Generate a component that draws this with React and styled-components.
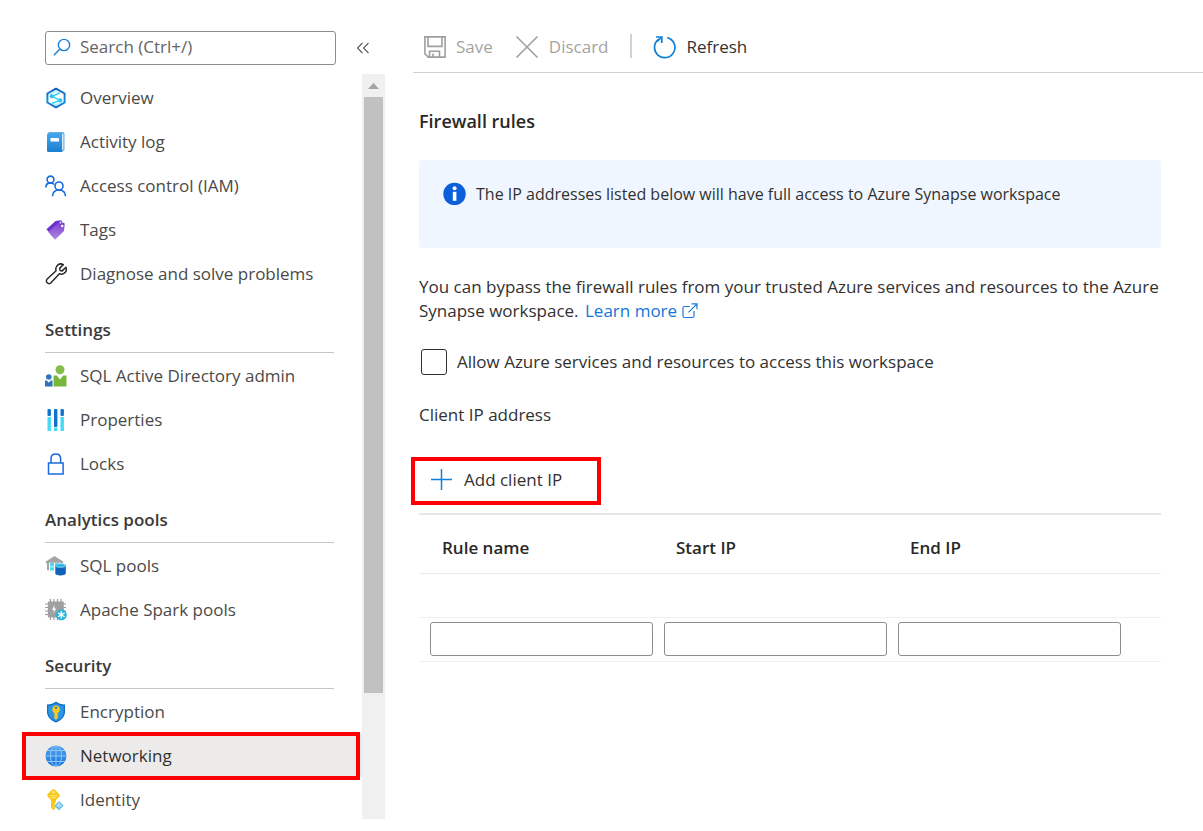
import React from "react";
import styled, { createGlobalStyle, css } from "styled-components";

const GlobalStyle = createGlobalStyle`
  *, *::before, *::after { box-sizing: border-box; }
  body {
    margin: 0;
    background: #fff;
    color: #323130;
    font-family: "Open Sans", "Noto Sans", sans-serif;
    font-size: 17px;
    line-height: 24px;
  }
  button, input { font: inherit; color: inherit; }
  svg { display: block; flex: none; }
`;

const Page = styled.div`
  display: flex;
  align-items: flex-start;
`;

/* Sidebar */

const Sidebar = styled.aside`
  flex: none;
  width: 385px;
  padding: 31px 0 12px 22px;
`;

const SearchRow = styled.div`
  display: flex;
  align-items: center;
  gap: 20px;
  padding-left: 23px;
`;

const SearchBox = styled.label`
  display: flex;
  align-items: center;
  gap: 9px;
  width: 291px;
  height: 34px;
  padding: 0 7px 2px;
  border: 1px solid #8f8d8b;
  border-radius: 3px;
`;

const SearchInput = styled.input`
  flex: 1;
  min-width: 0;
  padding: 0;
  border: 0;
  outline: 0;
  background: transparent;
  &::placeholder { color: #666463; opacity: 1; }
`;

const IconButton = styled.button`
  display: flex;
  padding: 0;
  border: 0;
  background: none;
  cursor: pointer;
`;

const NavScroller = styled.div`
  display: flex;
  margin-top: 9px;
`;

const Nav = styled.nav`
  flex: 1;
  padding-top: 1px;
`;

const NavHeading = styled.h2`
  display: flex;
  align-items: flex-end;
  height: 58px;
  margin: 0 28px 0 23px;
  padding-bottom: 10px;
  border-bottom: 1px solid #c8c6c4;
  color: #3b3a39;
  font-size: 17px;
  font-weight: 600;
`;

const NavList = styled.ul`
  margin: 0;
  padding: 0;
  list-style: none;
`;

const NavLink = styled.a`
  position: relative;
  display: flex;
  align-items: center;
  gap: 13px;
  height: 44px;
  padding: 1px 0 0 23px;
  color: #4b4a48;
  text-decoration: none;
  ${(p) => p.$active && css`
    background: #edebe9;
    color: #323130;
  `}
`;

const Callout = styled.span`
  position: absolute;
  inset: ${(p) => p.$inset || "0"};
  border: 4px solid #fe0000;
  pointer-events: none;
`;

const ScrollTrack = styled.div`
  display: flex;
  flex-direction: column;
  width: 23px;
  margin-bottom: 2px;
  background: #f0f0f0;
`;

const ScrollArrow = styled.div`
  display: flex;
  align-items: center;
  justify-content: center;
  height: 23px;
`;

const ScrollThumb = styled.div`
  height: 80%;
  margin: 0 2px;
  background: #c1c1c1;
`;

/* Main pane */

const Main = styled.main`
  flex: 1;
  min-width: 0;
  padding-left: 28px;
`;

const Toolbar = styled.div`
  display: flex;
  align-items: flex-start;
  height: 73px;
  padding: 22px 0 0 11px;
  border-bottom: 1px solid #d2d0ce;
`;

const ToolButton = styled.button`
  display: flex;
  align-items: center;
  gap: 10px;
  height: 50px;
  margin-right: 22px;
  padding: 0;
  border: 0;
  background: none;
  color: #323130;
  &:disabled { color: #a6a4a2; }
`;

const ToolDivider = styled.span`
  width: 2px;
  height: 24px;
  margin: 12px 21px 0 0;
  background: #d4d2d0;
`;

const Content = styled.div`
  padding: 36px 42px 36px 6px;
`;

const Title = styled.h1`
  margin: 0;
  color: #292827;
  font-size: 18px;
  font-weight: 600;
  line-height: 24px;
`;

const InfoBanner = styled.div`
  display: flex;
  align-items: flex-start;
  gap: 10px;
  min-height: 88px;
  margin-top: 27px;
  padding: 22px 24px;
  border-radius: 3px;
  background: #f0f6ff;
  font-size: 16px;
`;

const Paragraph = styled.p`
  margin: 27px 0 0;
`;

const TextLink = styled.a`
  display: inline-flex;
  align-items: center;
  gap: 5px;
  height: 24px;
  margin-left: 2px;
  color: #1375d8;
  text-decoration: none;
  vertical-align: top;
`;

const CheckRow = styled.label`
  display: flex;
  align-items: center;
  gap: 10px;
  margin-top: 26px;
  padding-left: 2px;
`;

const Checkbox = styled.input`
  appearance: none;
  flex: none;
  width: 26px;
  height: 26px;
  margin: 0;
  border: 1px solid #323130;
  border-radius: 3px;
  background: #fff;
  &:checked { background: #0078d4; }
`;

const FieldTitle = styled.p`
  margin: 28px 0 0;
`;

const AddButton = styled.button`
  position: relative;
  display: flex;
  align-items: center;
  gap: 12px;
  height: 48px;
  margin: 30px 0 8px -8px;
  padding: 0 39px 3px 20px;
  border: 0;
  background: none;
`;

const RulesTable = styled.table`
  width: 100%;
  border-top: 2px solid #e8e6e4;
  border-spacing: 0;
  table-layout: fixed;
`;

const HeadCell = styled.th`
  width: ${(p) => p.$width || "auto"};
  height: 59px;
  padding: 8px 0 0 23px;
  border-bottom: 1px solid #edebe9;
  color: #292827;
  font-weight: 600;
  text-align: left;
`;

const Cell = styled.td`
  height: 44px;
  padding: 0 0 1px 11px;
  border-bottom: 1px solid #f1f0ef;
`;

const TextField = styled.input`
  display: block;
  width: 100%;
  height: 34px;
  padding: 0 8px;
  border: 1px solid #8f8d8b;
  border-radius: 3px;
  background: #fff;
`;

/* Icons */

const Svg = ({ size = 22, children, ...rest }) => (
  <svg width={size} height={size} viewBox={`0 0 ${size} ${size}`} fill="none" aria-hidden="true" {...rest}>
    {children}
  </svg>
);

const SearchIcon = () => (
  <Svg size={18} stroke="#1b7fd6" strokeWidth="1.4">
    <circle cx="11" cy="7" r="5.6" />
    <path d="M7 11 .8 17.2" />
  </Svg>
);

const CollapseIcon = () => (
  <Svg size={14} stroke="#5a5856" strokeWidth="1.1">
    <path d="M6.500 2 1.500 7l5 5M12.500 2l-5 5 5 5" />
  </Svg>
);

const SynapseIcon = () => (
  <Svg>
    <defs>
      <linearGradient id="hex" x1="0" y1="0" x2="0" y2="1">
        <stop offset="0" stopColor="#0f5fb8" />
        <stop offset=".6" stopColor="#1490df" />
        <stop offset="1" stopColor="#1268c4" />
      </linearGradient>
    </defs>
    <path d="m11 1.700 8.600 4.800v9L11 20.300l-8.600-4.800v-9z" stroke="url(#hex)" strokeWidth="2" strokeLinejoin="round" />
    <path d="m4.500 7.600 6.500-3.500 3.800 2.200M17.500 14.500 11 18l-3.800-2.100" stroke="#a6edfd" strokeWidth="1.200" />
    <path d="M14.800 6 7 9.500l8.300 3.900-8.300 2.900" stroke="#3fd6f5" strokeWidth="1.600" strokeLinejoin="round" />
    <circle cx="6.800" cy="9.300" r="2.100" fill="#32bfe8" />
    <circle cx="15.200" cy="13.300" r="2.100" fill="#32c9ee" />
  </Svg>
);

const LogIcon = () => (
  <Svg>
    <defs>
      <linearGradient id="book" x1="0" y1="0" x2="0" y2="1">
        <stop offset="0" stopColor="#45a8ee" />
        <stop offset="1" stopColor="#1b7fd0" />
      </linearGradient>
    </defs>
    <path d="M3.500 1h14.200q1.800 0 1.800 1.800v15.700L17.500 21H4z" fill="#70addb" />
    <path d="M17 3h1.400v15L17 19.500z" fill="#d5eafa" />
    <path d="M2 3.500Q2 2 3.500 2H16q1 0 1 1v18H3.500Q2 21 2 19.500z" fill="url(#book)" />
    <rect x="5.500" y="7" width="8.500" height="3.600" rx=".5" fill="#fff" />
  </Svg>
);

const AccessIcon = () => (
  <Svg stroke="#146be0" strokeWidth="1.600">
    <circle cx="5.500" cy="4.500" r="3.400" />
    <path d="M.9 12.500C.9 9 3 7.900 5.500 7.900c1.700 0 2.700.6 3.500 1.600" />
    <circle cx="14" cy="11" r="4" />
    <path d="M7.500 21.300c.2-4 2.900-6.300 6.500-6.300s6.300 2.300 6.500 6.300" />
  </Svg>
);

const TagsIcon = () => (
  <Svg>
    <defs>
      <linearGradient id="tag" x1="0" y1="0" x2="0" y2="1">
        <stop offset="0" stopColor="#7a3fd0" />
        <stop offset="1" stopColor="#b48ae0" />
      </linearGradient>
    </defs>
    <path d="M1.500 10.300 10.500 2l5-.8q1.500 0 1.500 1.500l-.5 5.500L8 18z" fill="#6c2fd1" />
    <path d="M3.300 13 13 4l5-.5q1.700 0 1.700 1.600L19 12l-9 8.800z" fill="url(#tag)" />
    <circle cx="15.400" cy="3.500" r=".9" fill="#efe6fb" />
    <circle cx="17.200" cy="7" r="1.200" fill="#fff" />
  </Svg>
);

const WrenchIcon = () => (
  <Svg stroke="#2a2928" strokeWidth="1.500" strokeLinejoin="round">
    <path d="M18.300 1.600 14.600 5.300l.5 2.100 2.100.5 3.700-3.700c1 2.500 0 5.200-2.300 6.400-1.300.7-2.900.7-4.200.2L6 19.800c-1 1.100-2.700 1.100-3.800 0-1.100-1-1.100-2.700 0-3.800l8.900-8.300c-.7-2 .1-4.400 1.900-5.800 1.500-1.200 3.600-1.200 5.300-.3z" />
  </Svg>
);

const AdminIcon = () => (
  <Svg>
    <circle cx="15" cy="4.800" r="4.500" fill="#86bd4a" />
    <path d="M8.600 10.500h3.200l3.200 4 3.200-4h3.300V21.500H8.600z" fill="#76b83c" />
    <circle cx="3.800" cy="12" r="2.800" fill="#2d78bd" />
    <path d="M0 15.500h1.800l2 2.300 2-2.300h1.700v6H0z" fill="#2b74b8" />
  </Svg>
);

const PropertiesIcon = () => (
  <Svg>
    <path d="M2.500 8h3.400v14H2.500zM9 18.500h3.400V22H9zM15.500 8h3.400v14h-3.400z" fill="#45daf5" />
    <rect x="2.500" y="0" width="3.400" height="7" rx="1" fill="#0f72cf" />
    <rect x="9" y="0" width="3.400" height="18" rx="1" fill="#0f72cf" />
    <rect x="15.500" y="0" width="3.400" height="7" rx="1" fill="#0f72cf" />
  </Svg>
);

const LockIcon = () => (
  <Svg stroke="#1a6be0" strokeWidth="1.500">
    <path d="M3.500 10h14.600v11H3.500zM6 10V5.500C6 2.700 8 .9 10.800.9s4.800 1.800 4.800 4.600V10" />
  </Svg>
);

const SqlPoolIcon = () => (
  <Svg>
    <path d="M.8 6.500 9.500 1l8.700 5.500v1.800H16V7.800H4v7.500H2V8.300H.8z" fill="#a5a5a5" />
    <path d="M5 8h4v3.500H5zM10 8h4.300v3.500H10zM5 12.300h4V15.500H5z" fill="#4fd8f5" />
    <path d="M10.300 10.500v8c0 1.100 2.200 1.900 5.200 1.900s5.300-.8 5.300-1.900v-8z" fill="#0f62b8" />
    <ellipse cx="15.500" cy="10.500" rx="5.200" ry="1.900" fill="#2fb4e6" stroke="#b9ecfa" strokeWidth=".6" />
  </Svg>
);

const SparkIcon = () => (
  <Svg>
    <path d="M5.500 0v21M9 0v21M12.500 0v21M16 0v21M0 5h21M0 8.500h21M0 12h21M0 15.500h14" stroke="#9b9b9b" strokeWidth="1.200" />
    <rect x="2.800" y="2.500" width="16" height="16" rx="1" fill="#a0a0a0" />
    <path d="m9.500 6-2.500 5h2l-.8 3.500 3-5H9.400z" fill="#fff" />
    <circle cx="16.300" cy="15.800" r="5.500" fill="#28b3d9" />
    <path d="M16.300 12v7.600M13 13.900l6.600 3.800M19.600 13.900 13 17.700" stroke="#fff" strokeWidth="1.300" />
  </Svg>
);

const EncryptionIcon = () => (
  <Svg>
    <path d="M2 3.500C6 3.500 8.500 2.500 11 .5c2.500 2 5 3 9 3v7.200c0 5.300-4 8.600-9 10.900-5-2.300-9-5.600-9-10.900z" fill="#0e6cc4" />
    <path d="M3.200 4.500c3.400 0 5.600-.8 7.800-2.600 2.200 1.800 4.400 2.600 7.800 2.600v6.200c0 4.500-3.300 7.400-7.800 9.500-4.500-2.100-7.800-5-7.800-9.500z" fill="#2b96e6" />
    <path d="M11 4.400a4 4 0 0 1 1.800 7.500v5.200L11 18.800l-1.600-1.600v-5.300A4 4 0 0 1 11 4.400z" fill="#fbc81c" />
    <circle cx="11" cy="6.800" r="1.100" fill="#1a70c0" />
  </Svg>
);

const GlobeIcon = () => (
  <Svg>
    <defs>
      <linearGradient id="globe" x1="0" y1="0" x2="0" y2="1">
        <stop offset="0" stopColor="#51a3f0" />
        <stop offset="1" stopColor="#1577db" />
      </linearGradient>
    </defs>
    <circle cx="11" cy="11" r="10.500" fill="url(#globe)" />
    <g stroke="#9dcbf7" strokeWidth=".9">
      <path d="M11 .5v21M.5 11h21M2.300 5.500h17.400M2.300 16.500h17.400" />
      <ellipse cx="11" cy="11" rx="5.500" ry="10.400" />
    </g>
  </Svg>
);

const IdentityIcon = () => (
  <Svg>
    <path d="M8.500.3q1 0 1.800.8l3.800 3.800q1.600 1.600 0 3.200L11 11v2l-1.300 1.300L11 15.800 9.700 17l1.300 1.500-2.500 2.700L6 18.800V11L2.900 8q-1.600-1.600 0-3.200l3.800-3.700q.8-.8 1.800-.8z" fill="#fac918" />
    <circle cx="8.500" cy="3.200" r="1.200" fill="#fff1b0" />
    <path d="M4.500 6.700h8M5.500 8.600h6" stroke="#fde87f" strokeWidth="1" />
    <path d="m14 11.800 4.900 4.900-4.900 4.800-4.900-4.800z" fill="#57b4df" stroke="#fff" strokeWidth=".6" />
    <path d="M14 13.500v6M11.300 17l2.700-2.500 2.700 2.500M11.300 17h5.400" stroke="#d8f3fc" strokeWidth=".9" />
  </Svg>
);

const SaveIcon = () => (
  <Svg stroke="#a19f9d" strokeWidth="1.600">
    <path d="M.9.900h20.200v20.200H4.200L.9 17.800zM4 .9v9.500h14V.9M5.500 21v-5.800h10V21M9 17.500V21" />
  </Svg>
);

const DiscardIcon = () => (
  <Svg size={24} stroke="#a19f9d" strokeWidth="1.600">
    <path d="m1.500 1.500 21 21M22.500 1.500l-21 21" />
  </Svg>
);

const RefreshIcon = () => (
  <Svg size={23} stroke="#1080d8" strokeWidth="1.700">
    <path d="M14.300 1.600A10.200 10.200 0 1 1 6 3" />
    <path d="M3 1h5.800v6M8.800 1 4.300 5.500" />
  </Svg>
);

const InfoIcon = () => (
  <Svg size={23}>
    <circle cx="11.500" cy="12" r="11.200" fill="#0b5fdb" />
    <rect x="9.800" y="9.800" width="3.600" height="9" fill="#fff" />
    <circle cx="11.600" cy="6.200" r="2" fill="#fff" />
  </Svg>
);

const ExternalIcon = () => (
  <Svg size={16} stroke="#1f7bdb" strokeWidth="1.200">
    <path d="M8 3.500H2.500Q1 3.500 1 5v8q0 1.500 1.500 1.500h8q1.500 0 1.500-1.500V8M9.500.8H15v5.500M15 .8 6.500 9.300" />
  </Svg>
);

const PlusIcon = () => (
  <Svg size={21} stroke="#1080d8" strokeWidth="1.500">
    <path d="M10.500 0v21M0 10.500h21" />
  </Svg>
);

const sections = [
  {
    items: [
      ["Overview", SynapseIcon],
      ["Activity log", LogIcon],
      ["Access control (IAM)", AccessIcon],
      ["Tags", TagsIcon],
      ["Diagnose and solve problems", WrenchIcon],
    ],
  },
  {
    title: "Settings",
    items: [
      ["SQL Active Directory admin", AdminIcon],
      ["Properties", PropertiesIcon],
      ["Locks", LockIcon],
    ],
  },
  {
    title: "Analytics pools",
    items: [
      ["SQL pools", SqlPoolIcon],
      ["Apache Spark pools", SparkIcon],
    ],
  },
  {
    title: "Security",
    items: [
      ["Encryption", EncryptionIcon],
      ["Networking", GlobeIcon],
      ["Identity", IdentityIcon],
    ],
  },
];

const columns = ["Rule name", "Start IP", "End IP"];

export default function App() {
  return (
    <>
      <GlobalStyle />
      <Page>
        <Sidebar>
          <SearchRow>
            <SearchBox>
              <SearchIcon />
              <SearchInput type="text" placeholder="Search (Ctrl+/)" aria-label="Search" />
            </SearchBox>
            <IconButton type="button" aria-label="Collapse menu">
              <CollapseIcon />
            </IconButton>
          </SearchRow>
          <NavScroller>
            <Nav>
              {sections.map(({ title, items }) => (
                <React.Fragment key={title || "general"}>
                  {title && <NavHeading>{title}</NavHeading>}
                  <NavList>
                    {items.map(([label, Icon]) => {
                      const active = label === "Networking";
                      return (
                        <li key={label}>
                          <NavLink href="#" $active={active} aria-current={active ? "page" : undefined}>
                            <Icon />
                            {label}
                            {active && <Callout $inset="-1px 2px -3px 0" />}
                          </NavLink>
                        </li>
                      );
                    })}
                  </NavList>
                </React.Fragment>
              ))}
            </Nav>
            <ScrollTrack aria-hidden="true">
              <ScrollArrow>
                <svg width="11" height="6" viewBox="0 0 11 6"><path d="M5.500 0 11 6H0z" fill="#a3a3a3" /></svg>
              </ScrollArrow>
              <ScrollThumb />
            </ScrollTrack>
          </NavScroller>
        </Sidebar>

        <Main>
          <Toolbar>
            <ToolButton type="button" disabled><SaveIcon />Save</ToolButton>
            <ToolButton type="button" disabled><DiscardIcon />Discard</ToolButton>
            <ToolDivider />
            <ToolButton type="button"><RefreshIcon />Refresh</ToolButton>
          </Toolbar>
          <Content>
            <Title>Firewall rules</Title>
            <InfoBanner>
              <InfoIcon />
              <span>The IP addresses listed below will have full access to Azure Synapse workspace</span>
            </InfoBanner>
            <Paragraph>
              You can bypass the firewall rules from your trusted Azure services and resources to the Azure
              Synapse workspace.{" "}
              <TextLink href="#">Learn more<ExternalIcon /></TextLink>
            </Paragraph>
            <CheckRow>
              <Checkbox type="checkbox" />
              Allow Azure services and resources to access this workspace
            </CheckRow>
            <FieldTitle>Client IP address</FieldTitle>
            <AddButton type="button">
              <PlusIcon />
              Add client IP
              <Callout />
            </AddButton>
            <RulesTable>
              <thead>
                <tr>
                  {columns.map((name) => <HeadCell key={name} scope="col">{name}</HeadCell>)}
                  <HeadCell as="td" $width="40px" />
                </tr>
              </thead>
              <tbody>
                <tr><Cell /><Cell /><Cell /><Cell /></tr>
                <tr>
                  {columns.map((name) => (
                    <Cell key={name}><TextField type="text" aria-label={name} /></Cell>
                  ))}
                  <Cell />
                </tr>
              </tbody>
            </RulesTable>
          </Content>
        </Main>
      </Page>
    </>
  );
}
